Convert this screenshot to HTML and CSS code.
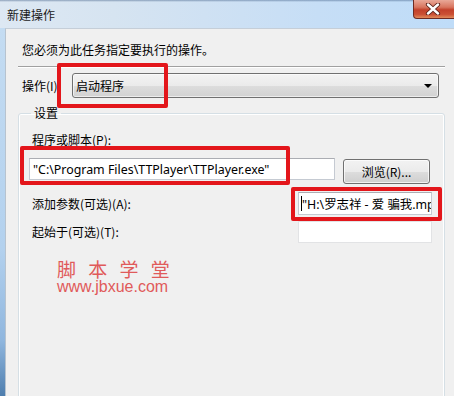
FILE: index.html
```html
<!DOCTYPE html>
<html>
<head>
<meta charset="utf-8">
<link rel="stylesheet" href="styles.css">
</head>
<body>
<div class="window">
  <div class="titlebar">
    <span class="title">新建操作</span>
    <div class="close">
      <svg width="16" height="12" viewBox="0 0 16 12"><path d="M3 1.5 L13 10.5 M13 1.5 L3 10.5" stroke="#5a2018" stroke-width="4.2" stroke-linecap="round"/><path d="M3 1.5 L13 10.5 M13 1.5 L3 10.5" stroke="#ffffff" stroke-width="2.4" stroke-linecap="round"/></svg>
    </div>
  </div>
  <div class="main">
    <div class="frame-left"></div>
    <div class="content">
      <p class="instruction">您必须为此任务指定要执行的操作。</p>
      <div class="separator"></div>
      <div class="action-row">
        <span class="label">操作(I):</span>
        <div class="combo">
          <span class="combo-text">启动程序</span>
          <span class="arrow"></span>
        </div>
      </div>
      <fieldset class="group">
        <legend>设置</legend>
        <div class="field-label first">程序或脚本(P):</div>
        <div class="program-row">
          <div class="input program">"C:\Program Files\TTPlayer\TTPlayer.exe"</div>
          <div class="button">浏览(R)...</div>
        </div>
        <div class="param-row">
          <span class="field-label">添加参数(可选)(A):</span>
          <div class="input small"><span class="caret"></span>"H:\罗志祥 - 爱 骗我.mp3"</div>
        </div>
        <div class="param-row second">
          <span class="field-label">起始于(可选)(T):</span>
          <div class="input small faint"></div>
        </div>
        <div class="watermark">
          <div class="wm-cn">脚 本 学 堂</div>
          <div class="wm-url">www.jbxue.com</div>
        </div>
      </fieldset>
    </div>
  </div>
  <div class="mark mark1"></div>
  <div class="mark mark2"></div>
  <div class="mark mark3"></div>
</div>
</body>
</html>
```
FILE: styles.css
```css
* { box-sizing: border-box; }
html, body { margin: 0; padding: 0; }
body {
  width: 454px;
  height: 396px;
  overflow: hidden;
  font-family: "Noto Sans", "Noto Sans CJK SC", sans-serif;
  font-size: 12px;
  color: #000;
  background: #f0f0f0;
}
.window {
  position: relative;
  width: 454px;
  height: 396px;
  display: flex;
  flex-direction: column;
  overflow: hidden;
}
.titlebar {
  height: 28px;
  flex: none;
  display: flex;
  align-items: flex-start;
  background:
    linear-gradient(to bottom, rgba(60,90,130,0.5) 0, rgba(255,255,255,0) 2px),
    linear-gradient(to right, #dde8f3 0, #d6e4f1 25%, #cfe1f3 45%, #c6def6 70%, #bfdcf8 100%);
}
.title {
  font-family: "Noto Sans CJK SC", sans-serif;
  font-size: 12px;
  line-height: 14px;
  margin: 8px 0 0 7px;
  color: #1a1a1a;
}
.close {
  margin-left: auto;
  width: 43px;
  height: 19px;
  margin-right: -2px;
  border: 1px solid #6e2b22;
  border-top: none;
  border-bottom-left-radius: 4px;
  background: linear-gradient(to bottom, #e9a898 0, #d8755f 40%, #c2402a 55%, #cb5034 80%, #e08a5a 100%);
  display: flex;
  align-items: center;
  justify-content: center;
  padding-right: 4px;
}
.main {
  flex: 1;
  display: flex;
  min-height: 0;
  overflow: hidden;
}
.frame-left {
  width: 5px;
  flex: none;
  background: linear-gradient(to bottom, #c4dcf2 0, #b3d1ee 60%, #8fb6de 85%, #4e7eae 100%);
}
.content {
  flex: 1;
  background: #f0f0f0;
  border-left: 1px solid #b7c3cf;
  border-top: 1px solid #c5ced8;
  padding-top: 13px;
  overflow: hidden;
}
.instruction {
  margin: 0 0 0 16px;
  line-height: 16px;
  font-family: "Noto Sans CJK SC", sans-serif;
}
.separator {
  margin: 8px 0 0 12px;
  width: 427px;
  background: #a0a0a0;
  border-bottom: 1px solid #ffffff;
  height: 2px;
}
.action-row {
  display: flex;
  align-items: center;
  margin-top: 5px;
  padding-left: 16px;
  height: 25px;
}
.label {
  width: 50px;
  font-family: "Noto Sans CJK SC", sans-serif;
}
.combo {
  width: 367px;
  height: 25px;
  border: 1px solid #707070;
  border-radius: 3px;
  background: linear-gradient(to bottom, #f3f3f3 0, #ebebeb 50%, #dddddd 51%, #d2d2d2 100%);
  display: flex;
  align-items: center;
  padding: 0 6px 0 3px;
  box-shadow: inset 0 0 0 1px rgba(255,255,255,0.6);
}
.combo-text {
  flex: 1;
  font-family: "Noto Sans CJK SC", sans-serif;
}
.arrow {
  width: 0;
  height: 0;
  border-left: 4px solid transparent;
  border-right: 4px solid transparent;
  border-top: 4px solid #000;
}
.group {
  margin: 7px 0 0 12px;
  width: 427px;
  height: 296px;
  border: 1px solid #d5dfe5;
  border-radius: 3px;
  box-shadow: inset 0 0 0 1px #ffffff;
  padding: 0 0 0 10px;
  min-width: 0;
}
.group legend {
  padding: 0 3px;
  margin-left: 2px;
  line-height: 16px;
  font-family: "Noto Sans CJK SC", sans-serif;
}
.field-label {
  font-family: "Noto Sans CJK SC", "Noto Sans", sans-serif;
  line-height: 16px;
  padding-left: 3px;
}
.field-label.first {
  margin-top: 11px;
}
.program-row {
  display: flex;
  align-items: flex-start;
  margin-top: 10px;
}
.input {
  background: #fff;
  border: 1px solid #c5cad2;
  border-top-color: #abadb3;
  font-family: "Noto Sans", "Noto Sans CJK SC", sans-serif;
  font-size: 12.4px;
  white-space: nowrap;
  overflow: hidden;
  display: flex;
  align-items: center;
}
.input.program {
  width: 306px;
  height: 22px;
  padding-left: 3px;
}
.button {
  margin-left: 8px;
  margin-top: 1px;
  width: 87px;
  height: 25px;
  border: 1px solid #707070;
  border-radius: 3px;
  background: linear-gradient(to bottom, #f2f2f2 0, #ebebeb 50%, #dddddd 51%, #cfcfcf 100%);
  box-shadow: inset 0 0 0 1px rgba(255,255,255,0.7);
  display: flex;
  align-items: center;
  justify-content: center;
  font-family: "Noto Sans CJK SC", sans-serif;
}
.param-row {
  display: flex;
  align-items: center;
  justify-content: space-between;
  margin-top: 8px;
  padding-right: 12px;
  height: 23px;
}
.param-row.second {
  margin-top: 5px;
}
.input.small {
  width: 134px;
  height: 23px;
  padding-left: 2px;
}
.input.faint {
  border-color: #e2e3e5;
  height: 22px;
}
.caret {
  display: inline-block;
  width: 1px;
  height: 15px;
  background: #000;
  flex: none;
}
.watermark {
  margin: 16px 0 0 28px;
  color: #e05a5a;
}
.wm-cn {
  font-family: "Noto Sans CJK SC", sans-serif;
  font-size: 19px;
  line-height: 19px;
  letter-spacing: 4px;
}
.wm-url {
  font-family: "Liberation Sans", sans-serif;
  font-size: 16px;
  line-height: 17px;
}
.mark {
  position: absolute;
  border: 4px solid #e3161b;
  border-radius: 2px;
}
.mark1 { left: 57px; top: 63px; width: 111px; height: 45px; }
.mark2 { left: 20px; top: 146px; width: 270px; height: 39px; }
.mark3 { left: 291px; top: 187px; width: 151px; height: 34px; }
```
